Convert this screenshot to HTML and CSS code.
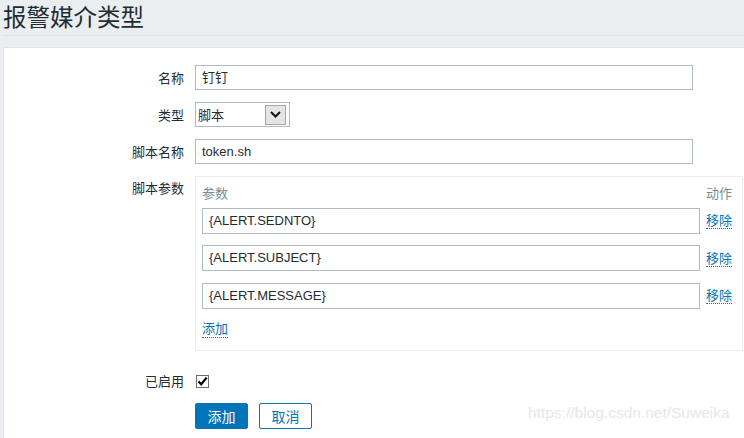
FILE: index.html
```html
<!DOCTYPE html>
<html lang="zh-CN">
<head>
<meta charset="utf-8">
<title>报警媒介类型</title>
<link rel="stylesheet" href="styles.css">
</head>
<body>
<header class="page-header"><h1 class="page-title">报警媒介类型</h1></header>
<main class="panel">
  <form class="form">
    <div class="row">
      <label class="label">名称</label>
      <div class="field"><div class="input wide">钉钉</div></div>
    </div>
    <div class="row">
      <label class="label">类型</label>
      <div class="field">
        <div class="select"><span class="select-text">脚本</span><span class="select-btn"><svg width="11" height="7" viewBox="0 0 11 7"><path d="M1 1 L5.5 5.5 L10 1" fill="none" stroke="#111" stroke-width="2"/></svg></span></div>
      </div>
    </div>
    <div class="row">
      <label class="label">脚本名称</label>
      <div class="field"><div class="input wide">token.sh</div></div>
    </div>
    <div class="row row-top">
      <label class="label label-top">脚本参数</label>
      <div class="field">
        <div class="params">
          <div class="params-head">参数</div>
          <div class="params-head act">动作</div>
          <div class="input param">{ALERT.SEDNTO}</div>
          <a class="link act">移除</a>
          <div class="input param">{ALERT.SUBJECT}</div>
          <a class="link act">移除</a>
          <div class="input param">{ALERT.MESSAGE}</div>
          <a class="link act">移除</a>
          <div class="add-cell"><a class="link">添加</a></div>
        </div>
      </div>
    </div>
    <div class="row row-check">
      <label class="label">已启用</label>
      <div class="field"><span class="checkbox"><svg width="11" height="11" viewBox="0 0 11 11"><path d="M1.5 5.5 L4.2 8.3 L9.6 1.6" fill="none" stroke="#000" stroke-width="2.2"/></svg></span></div>
    </div>
    <div class="row row-buttons">
      <span class="label"></span>
      <div class="field buttons">
        <button type="button" class="btn btn-primary">添加</button>
        <button type="button" class="btn btn-alt">取消</button>
      </div>
    </div>
  </form>
</main>
<div class="watermark">https://blog.csdn.net/Suweika</div>
</body>
</html>
```
FILE: styles.css
```css
html, body {
  margin: 0;
  padding: 0;
  overflow: hidden;
}
body {
  width: 744px;
  height: 438px;
  background: #ebeef0;
  font-family: "Liberation Sans", "Noto Sans CJK SC", sans-serif;
  font-size: 13px;
  color: #1f2c33;
  position: relative;
}
.page-header {
  margin: 0 0 0 3px;
  height: 35px;
  border-bottom: 1px solid #dfe3e6;
}
.page-title {
  margin: 0;
  font-family: "Noto Sans CJK SC", sans-serif;
  font-weight: normal;
  font-size: 23.5px;
  line-height: 33px;
  color: #1f2c33;
}
.panel {
  box-sizing: border-box;
  margin: 11px -20px 0 3px;
  background: #fff;
  border: 1px solid #dfe4e7;
  border-bottom: 0;
  padding: 17px 0 0;
  height: 391px;
}
.form {
  display: flex;
  flex-direction: column;
  gap: 12px;
}
.row {
  display: grid;
  grid-template-columns: 180px 1fr;
  column-gap: 11px;
  align-items: center;
}
.row-top { align-items: start; }
.label {
  text-align: right;
  font-family: "Noto Sans CJK SC", sans-serif;
  font-size: 13px;
  line-height: 18px;
  color: #1f2c33;
}
.label-top { padding-top: 3px; }
.input {
  box-sizing: border-box;
  height: 25px;
  border: 1px solid #acbbc6;
  background: #fff;
  padding: 0 6px;
  line-height: 23px;
  font-size: 13px;
  color: #1f2c33;
  font-family: "Liberation Sans", "Noto Sans CJK SC", sans-serif;
}
.wide { width: 498px; }
.select {
  box-sizing: border-box;
  width: 95px;
  height: 25px;
  border: 1px solid #acbbc6;
  display: flex;
  align-items: center;
  justify-content: space-between;
  padding: 0 3px 0 2px;
  font-family: "Noto Sans CJK SC", sans-serif;
  font-size: 13px;
}
.select-btn {
  box-sizing: border-box;
  width: 21px;
  height: 20px;
  background: #e5e5e5;
  border: 1px solid #a5a5a5;
  display: flex;
  align-items: center;
  justify-content: center;
}
.params {
  box-sizing: border-box;
  width: 548px;
  border: 1px solid #ebeef0;
  padding: 7px 6px 12px 6px;
  display: grid;
  grid-template-columns: 498px auto;
  column-gap: 6px;
  row-gap: 11.5px;
  align-items: center;
}
.params-head {
  color: #768d99;
  font-family: "Noto Sans CJK SC", sans-serif;
  line-height: 18px;
  margin-bottom: -6px;
}
.param { width: 498px; height: 26px; line-height: 24px; }
.link {
  color: #0275b8;
  font-family: "Noto Sans CJK SC", sans-serif;
  line-height: 16px;
  border-bottom: 1px dotted #0275b8;
  justify-self: start;
  cursor: pointer;
}
.act { justify-self: start; }
.add-cell {
  grid-column: 1 / span 2;
  line-height: 18px;
}
.row-check { margin-top: 9px; }
.checkbox {
  box-sizing: border-box;
  display: flex;
  align-items: center;
  justify-content: center;
  width: 13px;
  height: 13px;
  border: 1px solid #6d6d6d;
  margin-left: 1px;
}
.row-buttons { margin-top: 1px; }
.buttons {
  display: flex;
  gap: 11px;
}
.btn {
  box-sizing: border-box;
  height: 26px;
  padding: 0;
  border-radius: 2px;
  font-family: "Noto Sans CJK SC", sans-serif;
  font-size: 14px;
  line-height: 24px;
  cursor: pointer;
  margin: 0;
}
.btn-primary {
  width: 53px;
  background: #0275b8;
  border: 1px solid #0275b8;
  color: #fff;
}
.btn-alt {
  width: 53px;
  background: #fff;
  border: 1px solid #0275b8;
  color: #0275b8;
}
.watermark {
  position: absolute;
  left: 528px;
  top: 404px;
  font-family: "Liberation Sans", sans-serif;
  font-size: 15.5px;
  color: #e6e7e8;
  pointer-events: none;
}
```
